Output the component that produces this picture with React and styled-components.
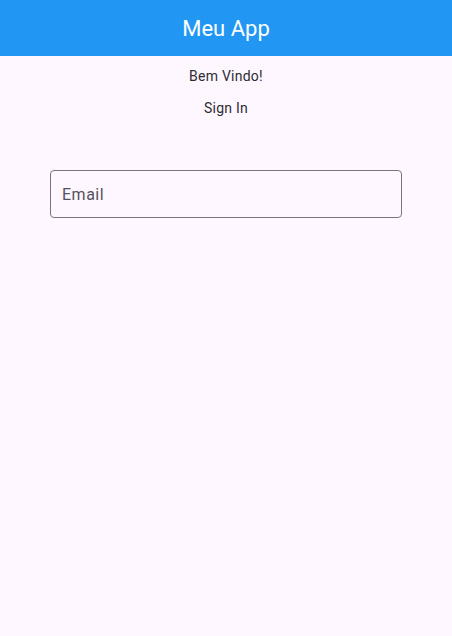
import React from "react";
import styled, { createGlobalStyle } from "styled-components";

const Global = createGlobalStyle`
  html, body {
    margin:0;
    padding:0;
    background:#fef7ff;
    font-family:Roboto, "Noto Sans", sans-serif;
  }
`;

const Page = styled.div`
  min-height:636px;
  display:flex;
  flex-direction:column;
  background:#fef7ff;
`;

const AppBar = styled.header`
  height:56px;
  background:#2196f3;
  display:flex;
  align-items:center;
  justify-content:center;
`;

const Title = styled.h1`
  margin:0;
  font-size:22px;
  font-weight:400;
  color:#ffffff;
`;

const Body = styled.main`
  display:flex;
  flex-direction:column;
  align-items:center;
  padding-top:10px;
`;

const Line = styled.p`
  margin:0 0 ${(p) => p.gap}px;
  font-size:14px;
  line-height:20px;
  color:#2e2b33;
  letter-spacing:0.25px;
`;

const Field = styled.input`
  box-sizing:border-box;
  width:352px;
  height:48px;
  border:1px solid #79747e;
  border-radius:4px;
  background:transparent;
  padding:0 11px;
  font-family:Roboto, sans-serif;
  font-size:16px;
  color:#1d1b20;
  letter-spacing:0.5px;
  outline:none;
  &::placeholder {
    color:#55515b;
    letter-spacing:0.5px;
  }
`;

export default function App() {
  return (
    <>
      <Global />
      <Page>
        <AppBar>
          <Title>Meu App</Title>
        </AppBar>
        <Body>
          <Line gap={12}>Bem Vindo!</Line>
          <Line gap={52}>Sign In</Line>
          <Field placeholder="Email" />
        </Body>
      </Page>
    </>
  );
}
